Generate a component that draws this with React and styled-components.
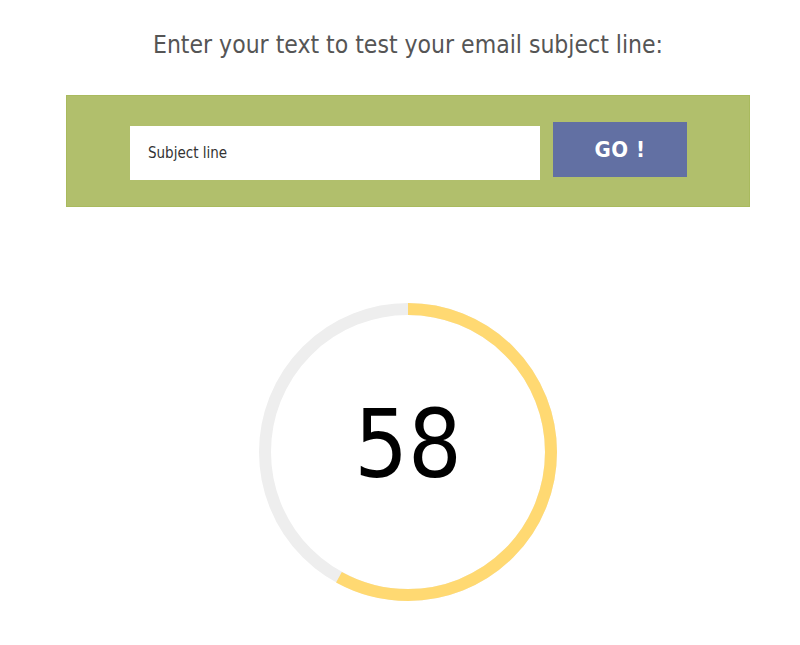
import React from 'react';
import styled, { createGlobalStyle } from 'styled-components';

const GlobalStyle = createGlobalStyle`
  html, body {
    margin: 0;
    padding: 0;
    background: #fff;
  }
  body {
    font-family: "DejaVu Sans Condensed", "DejaVu Sans", sans-serif;
    font-stretch: condensed;
  }
`;

const Page = styled.div`
  width: 800px;
  display: flex;
  flex-direction: column;
  align-items: center;
  padding-top: 30px;
`;

const Title = styled.h1`
  margin: 0 0 0 16px;
  font-size: 24.5px;
  font-weight: 400;
  color: #555;
  line-height: 30px;
`;

const Panel = styled.form`
  margin-top: 35px;
  width: 684px;
  height: 112px;
  box-sizing: border-box;
  margin-left: 16px;
  background: #b1bf6c;
  border: 1px solid #a9ba5e;
  display: flex;
  align-items: center;
  padding-left: 63px;
  gap: 13px;
`;

const Input = styled.input`
  width: 410px;
  height: 54px;
  box-sizing: border-box;
  border: none;
  outline: none;
  padding: 0 18px;
  margin-top: 4px;
  font-family: inherit;
  font-size: 15px;
  color: #333;
  background: #fff;
  &::placeholder {
    color: #333;
  }
`;

const Button = styled.button`
  width: 134px;
  height: 55px;
  border: none;
  background: #6270a3;
  color: #fff;
  font-family: inherit;
  font-weight: 700;
  font-size: 22px;
  letter-spacing: 0.5px;
  margin-top: -3px;
  cursor: pointer;
`;

const Gauge = styled.div`
  position: relative;
  margin-top: 94px;
  margin-left: 16px;
  width: 298px;
  height: 302px;
`;

const Score = styled.div`
  position: absolute;
  inset: 0;
  display: flex;
  align-items: center;
  justify-content: center;
  padding-bottom: 16px;
  font-size: 94px;
  font-weight: 300;
  color: #000;
`;

function ScoreRing({ value }) {
  const r = 143;
  const c = 2 * Math.PI * r;
  return (
    <svg width="298" height="302" viewBox="0 0 298 302">
      <circle cx="149" cy="151" r={r} fill="none" stroke="#eeeeee" strokeWidth="12" />
      <circle
        cx="149"
        cy="151"
        r={r}
        fill="none"
        stroke="#ffd972"
        strokeWidth="12"
        strokeDasharray={`${(c * value) / 100} ${c}`}
        transform="rotate(-90 149 151)"
      />
    </svg>
  );
}

export default function App() {
  const score = 58;
  return (
    <>
      <GlobalStyle />
      <Page>
        <Title>Enter your text to test your email subject line:</Title>
        <Panel onSubmit={e => e.preventDefault()}>
          <Input placeholder="Subject line" />
          <Button type="submit">GO !</Button>
        </Panel>
        <Gauge>
          <ScoreRing value={score} />
          <Score>{score}</Score>
        </Gauge>
      </Page>
    </>
  );
}
